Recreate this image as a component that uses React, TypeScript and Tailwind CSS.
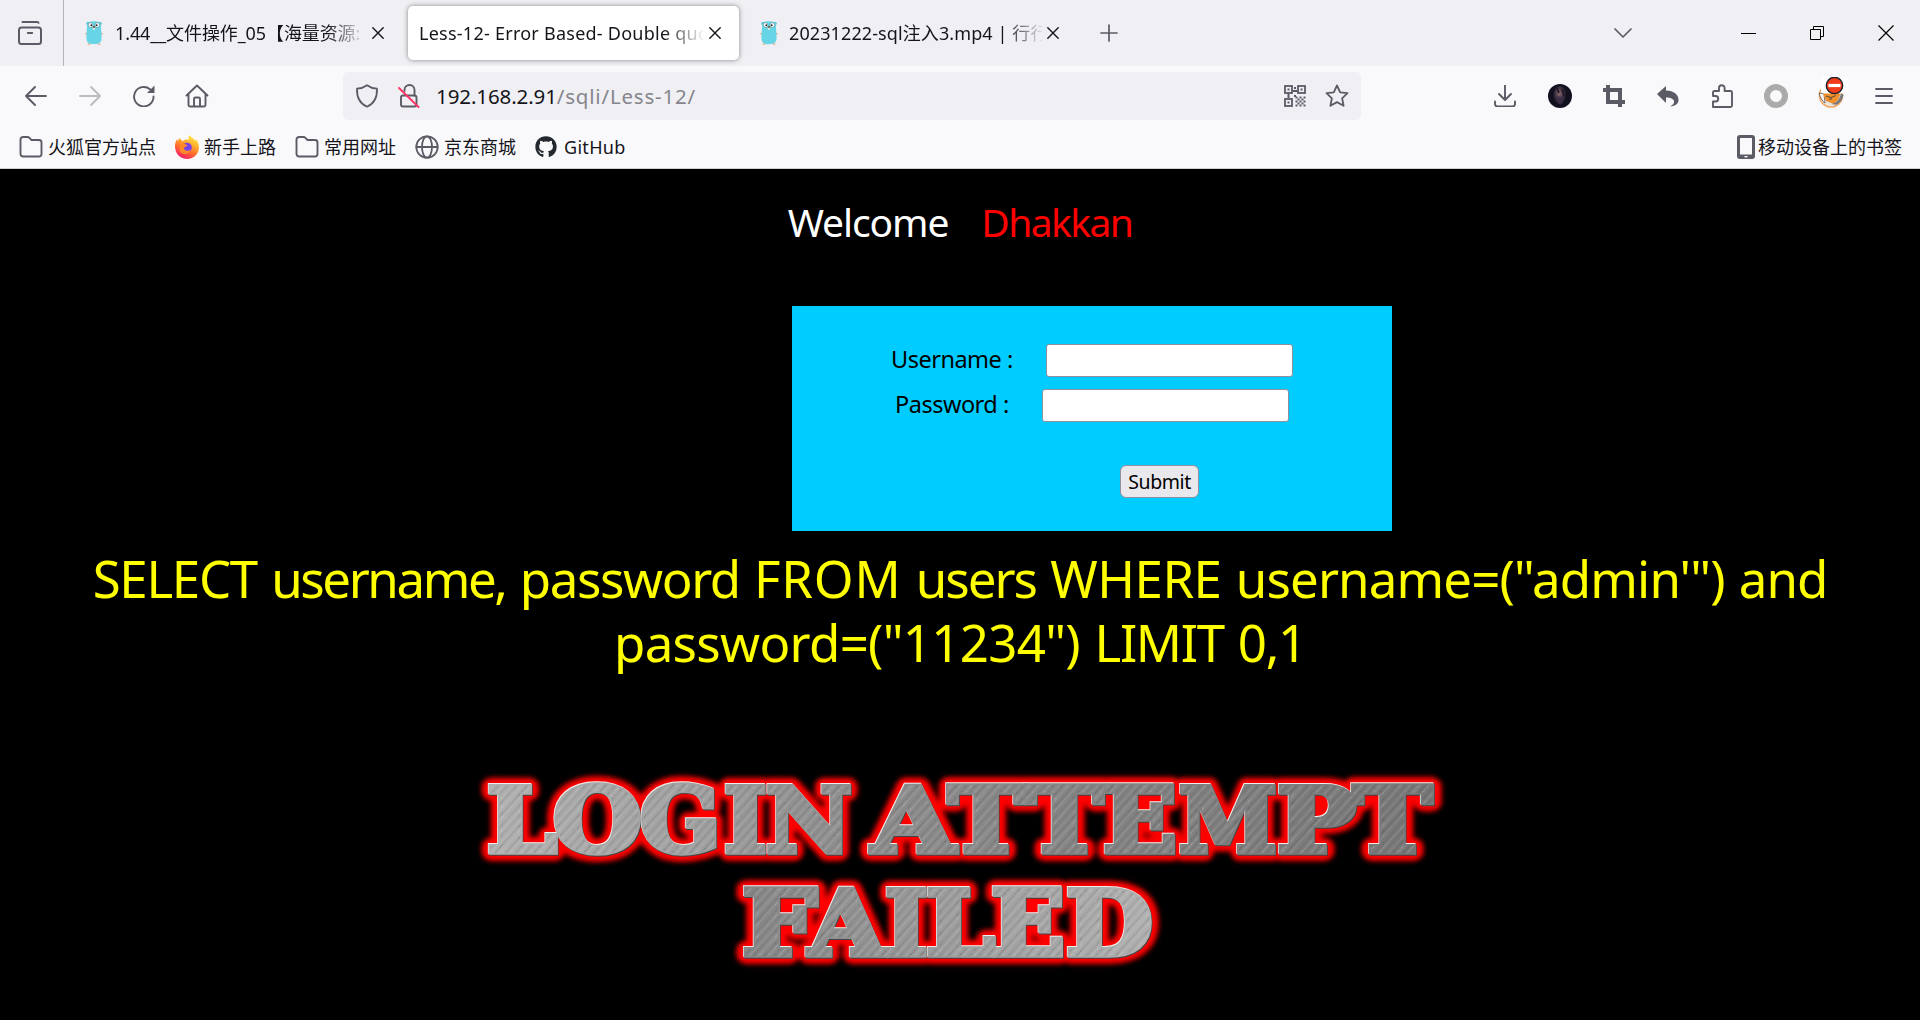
import type { ReactNode } from "react";
import { FaGithub } from "react-icons/fa";

const CJK = "font-['Noto_Sans','Noto_Sans_CJK_SC',sans-serif]";

function Gopher({ className }: { className: string }) {
  return (
    <svg className={className} viewBox="0 0 18 24" preserveAspectRatio="none">
      <circle cx="3" cy="2.6" r="1.8" fill="#5cc5d8" />
      <circle cx="15" cy="2.6" r="1.8" fill="#5cc5d8" />
      <ellipse cx="1.2" cy="12.6" rx="1.2" ry="0.9" fill="#d8b59a" />
      <ellipse cx="16.8" cy="12.6" rx="1.2" ry="0.9" fill="#d8b59a" />
      <ellipse cx="4" cy="23.1" rx="1.5" ry="0.9" fill="#d8b59a" />
      <ellipse cx="14" cy="23.1" rx="1.5" ry="0.9" fill="#d8b59a" />
      <path d="M2 5C2 1.500 5 .3 9 .3s7 1.200 7 4.700c0 3 .6 8 .6 12 0 4.500-2.600 6.200-7.600 6.200S1.400 21.500 1.400 17C1.400 13 2 8 2 5z" fill="#68d5e6" />
      <circle cx="5.600" cy="4" r="2.300" fill="#fff" stroke="#52727a" strokeWidth=".5" />
      <circle cx="12.400" cy="4" r="2.300" fill="#fff" stroke="#52727a" strokeWidth=".5" />
      <circle cx="6.300" cy="4.200" r=".9" fill="#222" />
      <circle cx="11.700" cy="4.200" r=".9" fill="#222" />
      <ellipse cx="9" cy="6.600" rx="1.700" ry="1" fill="#d0b08f" />
      <ellipse cx="9" cy="5.900" rx="1" ry=".7" fill="#222" />
      <rect x="8.200" y="7.200" width="1.600" height="1.400" fill="#fff" />
    </svg>
  );
}

function Stroke({ className, box = "0 0 24 24", w = 2, children }: { className: string; box?: string; w?: number; children: ReactNode }) {
  return (
    <svg className={className} viewBox={box} fill="none" stroke="currentColor" strokeWidth={w} strokeLinecap="round" strokeLinejoin="round">
      {children}
    </svg>
  );
}

function Close({ className }: { className: string }) {
  return (
    <Stroke className={className} box="0 0 12 12" w={1.4}>
      <path d="M.8.8l10.400 10.400M11.200.8L.8 11.200" />
    </Stroke>
  );
}

function TabBar() {
  return (
    <div className="flex h-[66px] items-center bg-[#f0f0f4] text-[#15141a]">
      <div className="flex h-full w-[64px] shrink-0 items-center border-r border-[#b4b4b9] pl-[18px] text-[#5b5b66]">
        <Stroke className="size-6">
          <path d="M4.500 1h15l1 .8" />
          <rect x="1" y="6.500" width="22" height="16.500" rx="2.500" />
          <path d="M9.800 12h4.400" />
        </Stroke>
      </div>
      <div className="flex h-full w-[344px] shrink-0 items-center pl-[21px]">
        <Gopher className="h-6 w-[18px] shrink-0" />
        <div className="ml-3 w-[248px] overflow-hidden whitespace-nowrap text-[18px] tracking-[-0.1px] [mask-image:linear-gradient(to_right,#000_212px,transparent_250px)]">
          1.44__文件操作_05【海量资源:
        </div>
        <Close className="ml-[9px] size-3" />
      </div>
      <div className="flex h-[54px] w-[331px] shrink-0 items-center rounded-[5px] bg-white pl-[11px] shadow-[0_0_5px_rgba(0,0,0,0.45)]">
        <div className="w-[285px] overflow-hidden whitespace-nowrap text-[18px] tracking-[0.25px] [mask-image:linear-gradient(to_right,#000_244px,transparent_286px)]">
          Less-12- Error Based- Double quo
        </div>
        <Close className="ml-[5px] size-3" />
      </div>
      <div className="flex h-full items-center pl-[21px]">
        <Gopher className="h-6 w-[18px] shrink-0" />
        <div className="ml-[11px] w-[253px] overflow-hidden whitespace-nowrap text-[18px] tracking-[0.1px] [mask-image:linear-gradient(to_right,#000_215px,transparent_256px)]">
          20231222-sql注入3.mp4 | 行行
        </div>
        <Close className="ml-[5px] size-3" />
        <Stroke className="ml-[41px] size-[18px] text-[#5b5b66]" box="0 0 18 18" w={1.700}>
          <path d="M9 1v16M1 9h16" />
        </Stroke>
      </div>
      <div className="ml-auto flex items-center pr-[26px]">
        <Stroke className="h-[10px] w-[18px] text-[#5b5b66]" box="0 0 18 10" w={1.700}>
          <path d="M1 1l8 8 8-8" />
        </Stroke>
        <div className="ml-[109px] h-px w-[15px] bg-black" />
        <svg className="ml-[54px] size-[14px]" viewBox="0 0 14 14" fill="none" stroke="#000">
          <path d="M.5 3.500h10v10H.5zM3.500 3.500v-3h10v10h-3" />
        </svg>
        <svg className="ml-[54px] size-4" viewBox="0 0 16 16" fill="none" stroke="#000" strokeWidth="1.200">
          <path d="M.5.5l15 15M15.500.5l-15 15" />
        </svg>
      </div>
    </div>
  );
}

function QrIcon() {
  const dots: [number, number][] = [];
  for (let r = 0; r < 5; r++) for (let c = 0; c < 5; c++) if ((r + c) % 2 === 0) dots.push([12.500 + c * 2, 12.500 + r * 2]);
  return (
    <svg className="size-[22px]" viewBox="0 0 22 22" fill="none" stroke="#5b5b66" strokeWidth="1.800">
      <rect x="1" y="1" width="7" height="7" />
      <rect x="14" y="1" width="7" height="7" />
      <rect x="1" y="14" width="7" height="7" />
      <g fill="#5b5b66" stroke="none">
        <rect x="3.500" y="3.500" width="2" height="2" />
        <rect x="16.500" y="3.500" width="2" height="2" />
        <rect x="3.500" y="16.500" width="2" height="2" />
        <rect x="10" y="2" width="2" height="2" />
        <rect x="9" y="5" width="5" height="2" />
        <rect x="3.500" y="8" width="2" height="5" />
        <rect x="10" y="10" width="2" height="2" />
        {dots.map(([x, y]) => <rect key={x + "-" + y} x={x - 1} y={y - 1} width="2" height="2" />)}
      </g>
    </svg>
  );
}

function NavBar() {
  return (
    <div className="flex h-[60px] items-center pl-[25px] pr-[27px] text-[#5b5b66]">
      <Stroke className="size-[22px]" box="0 0 22 22" w={1.900}>
        <path d="M1 11h20M10 2L1 11l9 9" />
      </Stroke>
      <Stroke className="ml-8 size-[22px] text-[#bcbcc2]" box="0 0 22 22" w={1.900}>
        <path d="M1 11h20M12 2l9 9-9 9" />
      </Stroke>
      <svg className="ml-8 size-[22px]" viewBox="0 0 22 22" fill="none" stroke="currentColor" strokeWidth="1.900" strokeLinecap="round">
        <path d="M20.500 11.500A9.700 9.700 0 1 1 17 4.200" />
        <path d="M21.500.5v7.500h-7.500z" fill="currentColor" stroke="none" />
      </svg>
      <Stroke className="ml-[30px] size-6" w={1.900}>
        <path d="M1.500 11.500L12 1.500l10.500 10M3.500 10v11a1.500 1.500 0 0 0 1.500 1.500h14a1.500 1.500 0 0 0 1.500-1.500V10" />
        <path d="M9 22v-7a1.500 1.500 0 0 1 1.500-1.500h3A1.500 1.500 0 0 1 15 15v7" />
      </Stroke>
      <div className="ml-[134px] flex h-12 w-[1018px] items-center rounded-[5px] bg-[#f0f0f4] pl-3 pr-3">
        <Stroke className="size-6" w={1.800}>
          <path d="M12 1.200c3 2.200 6.500 3.300 10 3.500.3 8-2 14.500-10 18C4 19.200 1.700 12.700 2 4.700c3.500-.2 7-1.300 10-3.500z" />
        </Stroke>
        <Stroke className="ml-[18px] size-6" w={1.900}>
          <rect x="4" y="11.500" width="15.500" height="11" rx="2" />
          <path d="M7.500 7V6a5 5 0 0 1 10 0v5.500" />
          <path d="M2 4l19.500 19" stroke="#ff3366" />
        </Stroke>
        <div className="ml-[15px] flex text-[20.500px] leading-6 whitespace-nowrap">
          <span className="tracking-[-0.1px] text-[#15141a]">192.168.2.91</span>
          <span className="tracking-[0.8px] text-[#85858b]">/sqli/Less-12/</span>
        </div>
        <div className="ml-auto flex items-center gap-[19px]">
          <QrIcon />
          <Stroke className="size-6" w={1.800}>
            <path d="M12 1.500l3.200 6.800 7.300.9-5.400 5.100 1.500 7.500L12 18.100l-6.600 3.700 1.500-7.500L1.500 9.200l7.300-.9z" />
          </Stroke>
        </div>
      </div>
      <div className="ml-auto flex items-center">
        <Stroke className="size-[22px]" box="0 0 22 22" w={1.900}>
          <path d="M11 0v14M5 9l6 6 6-6M1 16.500V19a2.500 2.500 0 0 0 2.500 2.500h15A2.500 2.500 0 0 0 21 19v-2.500" />
        </Stroke>
        <svg className="ml-8 size-6" viewBox="0 0 24 24">
          <defs>
            <radialGradient id="face" cx=".45" cy=".4" r=".55">
              <stop offset="0" stopColor="#8a6a66" />
              <stop offset=".45" stopColor="#4d3c4c" />
              <stop offset="1" stopColor="#11101f" />
            </radialGradient>
          </defs>
          <circle cx="12" cy="12" r="12" fill="#11101f" />
          <ellipse cx="12" cy="11.500" rx="6.500" ry="9.500" fill="url(#face)" />
          <path d="M9 4l2 5M14 5l2 7" stroke="#1a1526" strokeWidth="1.500" />
          <path d="M8 13c3-1 6 0 9 1l-3 6c-2 1-4 0-5-2z" fill="#3b3048" opacity=".8" />
        </svg>
        <svg className="ml-[31px] size-[22px]" viewBox="0 0 22 22" fill="none" stroke="#5b5b66" strokeWidth="4">
          <path d="M0 5h17v17M5 0v17h17" />
        </svg>
        <svg className="ml-8 size-[22px]" viewBox="0 0 22 22" fill="#5b5b66">
          <path d="M9 1v4.500c8 .3 12.500 4 12.500 9.500 0 3.500-3 6-8.500 6.500 3.500-2 4.500-3.700 4-5.500-.6-2.300-3.500-3.300-8-3.500V18L0 9z" />
        </svg>
        <Stroke className="ml-[32px] size-6" w={1.900}>
          <path d="M2 23V17.500h2.500a2.700 2.700 0 0 0 0-5.500H2V8.500A1.500 1.500 0 0 1 3.500 7H8V4a2.800 2.800 0 0 1 5.600 0v3h5.900A1.500 1.500 0 0 1 21 8.500v13a1.500 1.500 0 0 1-1.500 1.500z" />
        </Stroke>
        <div className="ml-[29px] size-6 rounded-full border-[6px] border-[#ababab]" />
        <svg className="ml-[29px] h-8 w-[31px] -translate-y-[3px]" viewBox="0 0 31 32">
          <circle cx="14" cy="18.500" r="11.500" fill="#e8e6e0" stroke="#f3a963" strokeWidth="1.600" />
          <path d="M2 16l5 1 1 9c-3-2-5-6-6-10z" fill="#fdf6ec" stroke="#555" strokeWidth=".8" />
          <path d="M6 16h18l-3 7-4 4-8-3z" fill="#f08f2c" />
          <path d="M24 16c-1 6-4 10-10 11l5 .8c4-1 7-6 7.500-10z" fill="#77797a" />
          <path d="M9 19l5 1.500 5-2M12 22.500l3-1" stroke="#5c4a33" fill="none" />
          <rect x="4" y="0" width="27" height="16.500" rx="3" fill="#fff" />
          <circle cx="17.500" cy="8.500" r="8.200" fill="#f13c1c" stroke="#15202b" strokeWidth="1.300" />
          <rect x="11.500" y="6.900" width="12" height="3.200" fill="#fff" />
        </svg>
        <Stroke className="ml-[27px] h-[16px] w-[18px]" box="0 0 18 16" w={1.800}>
          <path d="M1 1h16M1 8h16M1 15h16" />
        </Stroke>
      </div>
    </div>
  );
}

function Folder() {
  return (
    <Stroke className="size-6 shrink-0" w={1.900}>
      <path d="M1.500 4.500A2.500 2.500 0 0 1 4 2h4.500c1 0 1.500.5 2.200 1.200L12.500 5H20a2.500 2.500 0 0 1 2.500 2.500V19A2.500 2.500 0 0 1 20 21.500H4A2.500 2.500 0 0 1 1.500 19z" />
    </Stroke>
  );
}

function FirefoxLogo() {
  return (
    <svg className="size-6 shrink-0" viewBox="0 0 24 24">
      <defs>
        <linearGradient id="fx" x1=".8" y1="0" x2=".3" y2="1">
          <stop offset="0" stopColor="#fff44f" />
          <stop offset=".35" stopColor="#ffb02e" />
          <stop offset=".65" stopColor="#ff6a2f" />
          <stop offset="1" stopColor="#f5156c" />
        </linearGradient>
      </defs>
      <path d="M14.500 0c-1.500 2-1 4-.5 5C11 4 9 5 8 6 6 5.500 5.500 4 5 3 3.500 4 3 5 3 6L1.500 4.500C0 8-.5 11 .5 15c1.500 5.500 6 9 11.500 9 7 0 12-5.500 12-12 0-4-2-6.500-3.500-8v2C19 3 15.500 2.500 14.500 0z" fill="url(#fx)" />
      <circle cx="12" cy="12.500" r="4.800" fill="#7542e5" />
      <path d="M6 9c3-1.500 5 0 6.500 1.500-1 1.500-3 1-3.500 2.500 0 3 4.500 4 6.500 1-1 5-6 6.500-9.500 3.500C4 15.500 4.500 11 6 9z" fill="#ff8a2b" />
    </svg>
  );
}

function Bookmark({ icon, label }: { icon: ReactNode; label: string }) {
  return (
    <div className="flex items-center gap-[5px]">
      {icon}
      <span className="whitespace-nowrap text-[18px] leading-6 text-[#15141a]">{label}</span>
    </div>
  );
}

function BookmarkBar() {
  return (
    <div className="flex h-[43px] items-center border-b border-[#cfcfd6] pl-[19px] pr-[18px] text-[#5b5b66]">
      <div className="flex items-center gap-[19px]">
        <Bookmark icon={<Folder />} label="火狐官方站点" />
        <Bookmark icon={<FirefoxLogo />} label="新手上路" />
        <Bookmark icon={<Folder />} label="常用网址" />
        <Bookmark
          icon={
            <Stroke className="size-6 shrink-0" w={1.800}>
              <circle cx="12" cy="12" r="10.700" />
              <ellipse cx="12" cy="12" rx="5" ry="10.700" />
              <path d="M1.500 12h21" />
            </Stroke>
          }
          label="京东商城"
        />
        <div className="flex items-center gap-[7px] tracking-[0.3px]">
          <FaGithub className="size-[22px] text-[#24292f]" />
          <span className="text-[18px] leading-6 text-[#15141a]">GitHub</span>
        </div>
      </div>
      <div className="ml-auto flex items-center gap-[3px]">
        <svg className="h-6 w-[18px]" viewBox="0 0 18 24">
          <rect width="18" height="24" rx="3" fill="#5b5b66" />
          <rect x="3" y="3" width="12" height="16.500" fill="#f9f9fb" />
          <rect x="7.500" y="21" width="3" height="1.400" fill="#f9f9fb" />
        </svg>
        <span className="whitespace-nowrap text-[18px] leading-6 text-[#15141a]">移动设备上的书签</span>
      </div>
    </div>
  );
}

// Each glyph: letter, x origin, advance width.
type Glyph = [string, number, number];
const banner: { y: number; glyphs: Glyph[] }[] = [
  { y: 852, glyphs: [["L", 487, 70], ["O", 553, 89], ["G", 640, 81], ["I", 724, 43], ["N", 766, 86]] },
  { y: 852, glyphs: [["A", 872, 83], ["T", 948, 76], ["T", 1026, 77], ["E", 1103, 74], ["M", 1179, 98], ["P", 1277, 79], ["T", 1353, 79]] },
  { y: 955, glyphs: [["F", 742, 75], ["A", 809, 76], ["I", 885, 43], ["L", 926, 69], ["E", 991, 74], ["D", 1066, 87]] },
];

function Banner() {
  const words = banner.map((b, i) => (
    <text key={i} y={b.y}>
      {b.glyphs.map(([ch, x, w]) => (
        <tspan key={x} x={x} textLength={w} lengthAdjust="spacingAndGlyphs">{ch}</tspan>
      ))}
    </text>
  ));
  return (
    <svg className="h-[250px] w-[1020px] font-['DejaVu_Serif',serif] text-[90px] font-bold" viewBox="450 750 1020 250">
      <defs>
        <linearGradient id="metal" gradientUnits="userSpaceOnUse" x1="480" y1="780" x2="1440" y2="780">
          <stop offset="0" stopColor="#b0b0b0" />
          <stop offset=".22" stopColor="#a0a0a0" />
          <stop offset=".32" stopColor="#929292" />
          <stop offset=".42" stopColor="#8c8c8c" />
          <stop offset=".6" stopColor="#858585" />
          <stop offset="1" stopColor="#777" />
        </linearGradient>
        <linearGradient id="metalLow" gradientUnits="userSpaceOnUse" x1="740" y1="0" x2="1150" y2="0">
          <stop offset="0" stopColor="#858585" />
          <stop offset=".5" stopColor="#9c9c9c" />
          <stop offset="1" stopColor="#b0b0b0" />
        </linearGradient>
        <pattern id="brush" width="29" height="40" patternUnits="userSpaceOnUse" patternTransform="rotate(42)">
          <rect x="0" width="1" height="40" fill="#fff" opacity=".14" />
          <rect x="3" width="1.500" height="40" fill="#000" opacity=".06" />
          <rect x="7" width="1" height="40" fill="#fff" opacity=".09" />
          <rect x="10" width="1" height="40" fill="#000" opacity=".1" />
          <rect x="13" width="2.500" height="40" fill="#fff" opacity=".08" />
          <rect x="18" width="1" height="40" fill="#000" opacity=".11" />
          <rect x="21" width="1" height="40" fill="#fff" opacity=".12" />
          <rect x="25" width="2" height="40" fill="#000" opacity=".05" />
        </pattern>
        <filter id="glow" x="-5%" y="-10%" width="110%" height="120%">
          <feGaussianBlur stdDeviation="2.400" />
        </filter>
      </defs>
      <g fill="#f00" stroke="#f00" strokeWidth="18" strokeLinejoin="round" filter="url(#glow)" aria-hidden="true">{words}</g>
      <g fill="#444" stroke="#444" strokeWidth="5.500" transform="translate(.7 .7)" aria-hidden="true">{words}</g>
      <g fill="#eee" stroke="#eee" strokeWidth="5.500" transform="translate(-.8 -.8)" aria-hidden="true">{words}</g>
      <g fill="url(#metal)" stroke="url(#metal)" strokeWidth="5.500">{words.slice(0, 2)}</g>
      <g fill="url(#metalLow)" stroke="url(#metalLow)" strokeWidth="5.500">{words[2]}</g>
      <g fill="url(#brush)" stroke="url(#brush)" strokeWidth="3" aria-hidden="true">{words}</g>
    </svg>
  );
}

export default function App() {
  return (
    <div className={`flex h-[1020px] w-[1920px] flex-col overflow-hidden bg-black ${CJK}`}>
      <header className="bg-[#f9f9fb]">
        <TabBar />
        <NavBar />
        <BookmarkBar />
      </header>
      <main className="flex flex-col">
        <h1 className="flex h-[137px] justify-center gap-[33px] pt-[26px] text-[39px] leading-[54px]">
          <span className="tracking-[-1.100px] text-white">Welcome</span>
          <span className="tracking-[-1.600px] text-[#f00]">Dhakkan</span>
        </h1>
        <form className="ml-[792px] flex h-[225px] w-[600px] flex-col bg-[#00ccff] pt-[38px] text-[23.500px] leading-8 tracking-[-0.500px] text-black">
          <label className="flex h-[33px] items-center pl-[99px]">
            <span className="w-[155px] pb-[3px]">Username :</span>
            <input className="h-[33px] w-[247px] rounded-[3px] border border-[#8f8f9d] bg-white" />
          </label>
          <label className="mt-3 flex h-[33px] items-center pl-[103px]">
            <span className="w-[147px] pb-[3px]">Password :</span>
            <input type="password" className="h-[33px] w-[247px] rounded-[3px] border border-[#8f8f9d] bg-white" />
          </label>
          <button type="button" className="mt-[43px] ml-[328px] h-[33px] w-[79px] rounded-[6px] border border-[#8f8f9d] bg-[#e9e9ed] text-[19.500px] leading-6 tracking-[-0.400px]">
            Submit
          </button>
        </form>
        <p className="mt-[15px] flex h-[204px] flex-col items-center text-[51px] leading-[64px] whitespace-nowrap text-[#ff0]">
          <span className="tracking-[-1px] [word-spacing:2px]">
            <span className="tracking-[-1.300px]">SELECT</span> <span className="tracking-[-2.400px]">username,</span>{" "}
            <span className="tracking-[-1.400px]">password</span> <span className="tracking-[0.800px]">FROM</span>{" "}
            <span className="tracking-[-2px]">users</span> <span className="tracking-[-0.500px]">WHERE</span>{" "}
            <span className="tracking-[-0.850px]">username=("admin'")</span> and
          </span>
          <span className="tracking-[-0.700px] [word-spacing:2px]">
            password=("11234") <span className="tracking-[-1.300px]">LIMIT 0,1</span>
          </span>
        </p>
        <div className="ml-[450px]"><Banner /></div>
      </main>
    </div>
  );
}
